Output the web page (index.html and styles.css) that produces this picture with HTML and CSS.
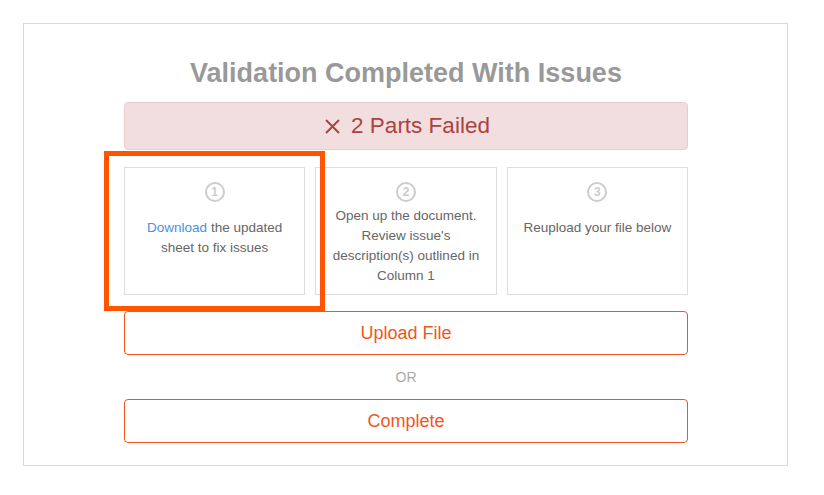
FILE: index.html
```html
<!DOCTYPE html>
<html lang="en">
<head>
  <meta charset="UTF-8">
  <meta name="viewport" content="width=device-width, initial-scale=1.0">
  <title>Validation</title>
  <link rel="stylesheet" href="styles.css">
</head>
<body>
  <div class="panel">
    <h1 class="title">Validation Completed With Issues</h1>

    <!-- result banner -->
    <div class="alert">
      <svg class="alert-icon" width="15" height="15" viewBox="0 0 15 15">
        <path d="M1 1 L14 14 M14 1 L1 14" stroke="#a94442" stroke-width="2" fill="none"/>
      </svg>
      <span>2 Parts Failed</span>
    </div>

    <!-- steps -->
    <div class="steps">
      <div class="step step-marked">
        <span class="step-num">1</span>
        <p class="step-text"><a href="#" class="link">Download</a> the updated sheet to fix issues</p>
        <div class="marker"></div>
      </div>
      <div class="step">
        <span class="step-num">2</span>
        <p class="step-text step-text-long">Open up the document. Review issue's description(s) outlined in Column 1</p>
      </div>
      <div class="step">
        <span class="step-num">3</span>
        <p class="step-text">Reupload your file below</p>
      </div>
    </div>

    <button class="btn">Upload File</button>
    <div class="or">OR</div>
    <button class="btn">Complete</button>
  </div>
</body>
</html>
```

FILE: styles.css
```css
body {
  margin: 0;
  background-color: #fff;
  font-family: "Liberation Sans", Arial, sans-serif;
}

.panel {
  width: 765px;
  box-sizing: border-box;
  margin: 23px 0 0 23px;
  padding: 33px 99px 22px 100px;
  border: 1px solid #d9d9d9;
}

.title {
  margin: 0 0 13px;
  font-size: 27px;
  line-height: 32px;
  font-weight: bold;
  color: #999;
  text-align: center;
}

.alert {
  display: flex;
  align-items: center;
  justify-content: center;
  gap: 11px;
  height: 48px;
  box-sizing: border-box;
  padding-left: 3px;
  background-color: #f2dede;
  border: 1px solid #ebccd1;
  border-radius: 4px;
  color: #a94442;
  font-size: 22.5px;
}

.alert-icon {
  display: block;
}

.steps {
  display: grid;
  grid-template-columns: repeat(3, 1fr);
  gap: 10px;
  margin-top: 17px;
}

.step {
  height: 128px;
  box-sizing: border-box;
  padding: 14px 10px 0;
  border: 1px solid #ddd;
  text-align: center;
}

.step-marked {
  position: relative;
}

.marker {
  position: absolute;
  top: -17px;
  left: -21px;
  right: -21px;
  bottom: -17px;
  border: 5px solid #ff5500;
}

.step-num {
  display: inline-block;
  width: 20px;
  height: 20px;
  box-sizing: border-box;
  border: 2px solid #ccc;
  border-radius: 50%;
  color: #ccc;
  font-size: 12px;
  font-weight: bold;
  line-height: 16px;
}

.step-text {
  margin: 16px 0 0;
  font-size: 13.5px;
  line-height: 20px;
  color: #666;
}

.step-text-long {
  margin-top: 4px;
}

.link {
  color: #4a90e2;
  text-decoration: none;
}

.btn {
  display: block;
  width: 100%;
  height: 44px;
  margin-top: 16px;
  background: #fff;
  border: 1px solid #f0561d;
  border-radius: 4px;
  color: #f0561d;
  font-family: inherit;
  font-size: 18px;
  cursor: pointer;
}

.or {
  margin: 12px 0;
  font-size: 14px;
  line-height: 20px;
  color: #aaa;
  text-align: center;
}

.or + .btn {
  margin-top: 0;
}
```
